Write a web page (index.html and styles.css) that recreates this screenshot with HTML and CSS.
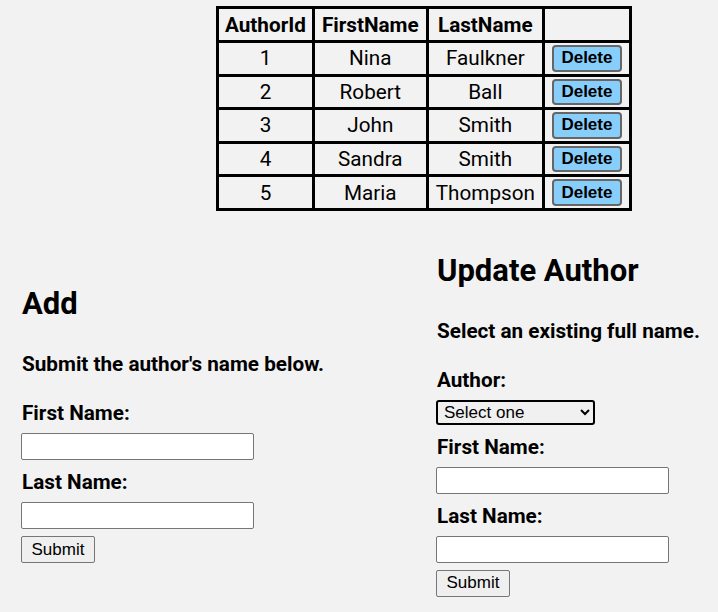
FILE: index.html
```html
<!DOCTYPE html>
<html>
<head>
<meta charset="utf-8">
<link rel="stylesheet" href="styles.css">
</head>
<body>
<table class="authors">
  <thead>
    <tr><th class="id">AuthorId</th><th>FirstName</th><th>LastName</th><th></th></tr>
  </thead>
  <tbody>
    <tr><td class="id">1</td><td>Nina</td><td>Faulkner</td><td><button class="del">Delete</button></td></tr>
    <tr><td class="id">2</td><td>Robert</td><td>Ball</td><td><button class="del">Delete</button></td></tr>
    <tr><td class="id">3</td><td>John</td><td>Smith</td><td><button class="del">Delete</button></td></tr>
    <tr><td class="id">4</td><td>Sandra</td><td>Smith</td><td><button class="del">Delete</button></td></tr>
    <tr><td class="id">5</td><td>Maria</td><td>Thompson</td><td><button class="del">Delete</button></td></tr>
  </tbody>
</table>
<div class="forms">
  <form class="col col-add">
    <h1 class="title">Add</h1>
    <p class="sub">Submit the author's name below.</p>
    <label class="lbl">First Name:</label>
    <input class="txt" type="text">
    <label class="lbl">Last Name:</label>
    <input class="txt" type="text">
    <button class="btn" type="button">Submit</button>
  </form>
  <form class="col col-update">
    <h1 class="title">Update Author</h1>
    <p class="sub">Select an existing full name.</p>
    <label class="lbl">Author:</label>
    <select class="sel"><option>Select one</option></select>
    <label class="lbl">First Name:</label>
    <input class="txt" type="text">
    <label class="lbl">Last Name:</label>
    <input class="txt" type="text">
    <button class="btn" type="button">Submit</button>
  </form>
</div>
</body>
</html>
```
FILE: styles.css
```css
html, body {
  background: #f2f2f2;
}
body {
  margin: 6px 8px 8px;
  font-family: Roboto, "Liberation Sans", sans-serif;
  color: #000;
}
.authors {
  border-collapse: collapse;
  margin-left: 208px;
  font-size: 20.7px;
}
.authors th,
.authors td {
  border: 3px solid #000;
  text-align: center;
  padding: 2px 7px;
}
.authors th {
  font-weight: bold;
  padding: 3.5px 7px;
}
.authors .id {
  padding-left: 6px;
  padding-right: 6px;
}
.del {
  font-family: "Liberation Sans", Arial, sans-serif;
  font-weight: bold;
  font-size: 17px;
  background: #87cefa;
  border: 2px solid #666;
  border-radius: 4px;
  height: 26.6px;
  width: 70px;
  padding: 0;
  color: #000;
  display: block;
  margin: 0 auto;
}
.forms {
  display: flex;
  align-items: center;
  padding-top: 41px;
}
.col {
  display: flex;
  flex-direction: column;
  align-items: flex-start;
  margin: 0;
}
.col-add {
  flex: 0 0 415px;
  padding-left: 13px;
}
.col-update {
  flex: 1;
}
.title {
  font-size: 31px;
  font-weight: bold;
  margin: 0 0 30px;
  padding-left: 1px;
}
.sub {
  font-size: 20.7px;
  font-weight: bold;
  margin: 0 0 22px;
  padding-left: 1px;
}
.lbl {
  display: block;
  font-size: 20.7px;
  font-weight: bold;
  margin: 3px 0 8px;
  padding-left: 1px;
}
.txt {
  box-sizing: border-box;
  width: 233px;
  height: 27px;
  border: 1px solid #767676;
  border-radius: 2px;
  background: #fff;
  margin: 0 0 7px;
  font-family: "Liberation Sans", Arial, sans-serif;
  font-size: 17px;
}
.sel {
  box-sizing: border-box;
  width: 159px;
  height: 25px;
  border: 2px solid #000;
  border-radius: 3px;
  background: #f0f0f0;
  margin: 0 0 7px;
  font-family: "Liberation Sans", Arial, sans-serif;
  font-size: 17px;
  color: #000;
  padding: 0 2px;
}
.btn {
  box-sizing: border-box;
  width: 74px;
  height: 27px;
  border: 1px solid #767676;
  border-radius: 2px;
  background: #efefef;
  font-family: "Liberation Sans", Arial, sans-serif;
  font-size: 17px;
  color: #000;
  padding: 0;
}
```
